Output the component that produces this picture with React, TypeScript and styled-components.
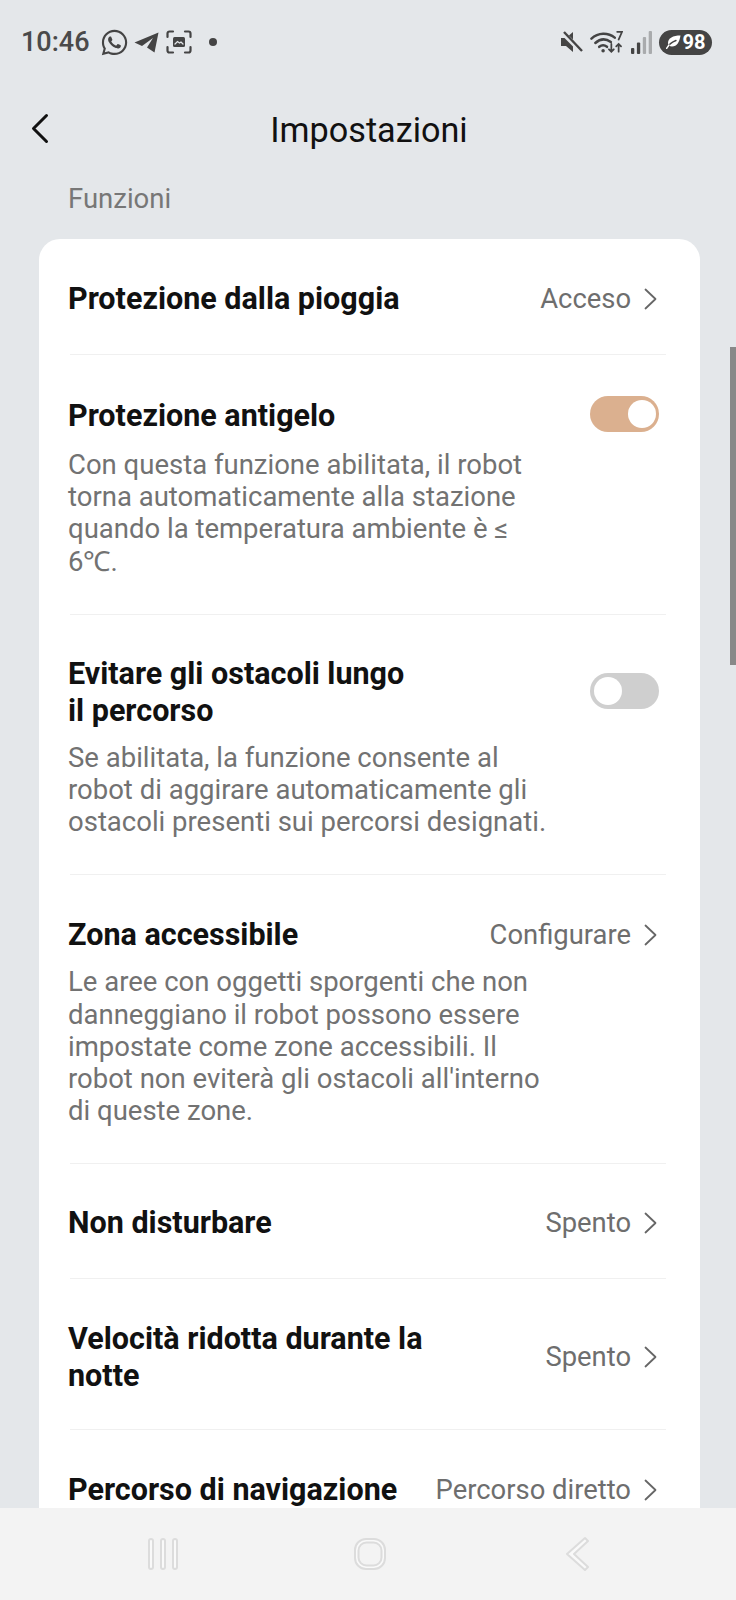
import styled, { createGlobalStyle } from 'styled-components'
import { FaWhatsapp } from 'react-icons/fa'

const GlobalStyle = createGlobalStyle`
  html, body {
    margin: 0;
    padding: 0;
    background: #e4e7ea;
    font-family: Roboto, "Liberation Sans", sans-serif;
  }
`

const Screen = styled.div`
  position: relative;
  width: 736px;
  height: 1600px;
  background: #e4e7ea;
  display: flex;
  flex-direction: column;
  overflow: hidden;
`

const StatusBar = styled.div`
  height: 84px;
  padding: 0 24px 0 21px;
  box-sizing: border-box;
  display: flex;
  align-items: center;
  justify-content: space-between;
  color: #444;
`

const StatusGroup = styled.div`
  display: flex;
  align-items: center;
`

const Time = styled.span`
  font-size: 27px;
  font-weight: 500;
  color: #4a4a4a;
  margin-right: 10px;
`

const Dot = styled.span`
  width: 8px;
  height: 8px;
  border-radius: 50%;
  background: #444;
  margin-left: 17px;
`

const Pill = styled.div`
  width: 53px;
  height: 25px;
  margin-left: 7px;
  border-radius: 13px;
  background: #444;
  color: #fff;
  font-size: 20px;
  font-weight: 700;
  display: flex;
  align-items: center;
  justify-content: center;
  gap: 2px;
`

const Header = styled.div`
  display: flex;
  align-items: center;
  justify-content: center;
  position: relative;
  height: 92px;
`

const BackButton = styled.div`
  position: absolute;
  left: 30px;
  top: 27px;
  width: 20px;
  height: 34px;
`

const PageTitle = styled.h1`
  margin: 0 0 0 2px;
  font-size: 34.2px;
  font-weight: 400;
  color: #111;
`

const SectionLabel = styled.div`
  margin: 7px 0 24px 68px;
  font-size: 27.5px;
  line-height: 32px;
  color: #777;
`

const Scroller = styled.div`
  flex: 1;
  min-height: 0;
  overflow: hidden;
`

const Card = styled.div`
  margin: 0 36px 0 39px;
  background: #fff;
  border-radius: 21px 21px 0 0;
`

const Row = styled.div<{ $top?: number; $bottom?: number; $gap?: number }>`
  margin: 0 34px 0 31px;
  padding: ${(p) => p.$top ?? 41}px 7px ${(p) => p.$bottom ?? 36}px 0;
  border-bottom: 1px solid #f0f0f0;
  display: flex;
  flex-direction: column;
  gap: ${(p) => p.$gap ?? 13}px;
`

const RowHead = styled.div`
  display: flex;
  justify-content: space-between;
  align-items: center;
`

const RowTitle = styled.div<{ $width?: number }>`
  font-size: 30.5px;
  line-height: 37px;
  font-weight: 700;
  color: #111;
  margin-left: -2px;
  ${(p) => (p.$width ? `max-width: ${p.$width}px;` : '')}
`

const RowDesc = styled.div`
  max-width: 490px;
  margin-left: -2px;
  font-size: 27.5px;
  line-height: 32.2px;
  color: #727272;
`

const RowValue = styled.div`
  display: flex;
  align-items: center;
  gap: 13px;
  height: 37px;
  margin-right: 2px;
  font-size: 27.4px;
  color: #6e6e6e;
  white-space: nowrap;
`

const Toggle = styled.div<{ $on?: boolean }>`
  width: 69px;
  height: 36px;
  margin-bottom: 2px;
  border-radius: 18px;
  background: ${(p) => (p.$on ? '#dbb08f' : '#cfcfcf')};
  display: flex;
  align-items: center;
  justify-content: ${(p) => (p.$on ? 'flex-end' : 'flex-start')};
  padding: 0 3px 0 4px;
  box-sizing: border-box;
`

const Knob = styled.span`
  width: 28px;
  height: 28px;
  border-radius: 50%;
  background: #fff;
`

const NavBar = styled.div`
  height: 92px;
  background: #f3f3f3;
  display: grid;
  grid-template-columns: repeat(3, 207px);
  align-items: center;
  justify-items: center;
  padding-left: 59px;
  box-sizing: border-box;
`

const ScrollThumb = styled.div`
  position: absolute;
  right: 0;
  top: 347px;
  width: 6px;
  height: 318px;
  background: #888;
`

const Chevron = () => (
  <svg width="13" height="22" viewBox="0 0 13 22" fill="none" stroke="#666" strokeWidth="1.8" strokeLinecap="round" strokeLinejoin="round">
    <path d="M1.500 1.500l10 9.500-10 9.500" />
  </svg>
)

const Value = ({ text }: { text: string }) => (
  <RowValue>
    {text}
    <Chevron />
  </RowValue>
)

const App = () => {
  return (
    <Screen>
      <GlobalStyle />
      <StatusBar>
        <StatusGroup>
          <Time>10:46</Time>
          <FaWhatsapp size={29} />
          <svg width="25" height="21" viewBox="0 0 25 21" fill="#444" style={{ marginLeft: 5 }}>
            <path d="M.5 10.500L24.500.5l-4 20-7.500-5 6-9.500-11 8z" />
          </svg>
          <svg width="26" height="24" viewBox="0 0 26 24" fill="none" stroke="#444" strokeWidth="2.200" strokeLinecap="round" style={{ marginLeft: 7 }}>
            <path d="M1.500 7V3.500a2 2 0 012-2H7M19 1.500h3.500a2 2 0 012 2V7M24.500 17v3.500a2 2 0 01-2 2H19M7 22.500H3.500a2 2 0 01-2-2V17" />
            <rect x="7" y="7" width="12" height="10" rx="1.500" fill="#444" stroke="none" />
            <path d="M9 14l2.500-2.500 2 1.500 1.500-1 2 2" stroke="#e4e7ea" strokeWidth="1.300" />
          </svg>
          <Dot />
        </StatusGroup>
        <StatusGroup>
          <svg width="22" height="22" viewBox="0 0 22 22" fill="#444">
            <path d="M0 7h5l7-6v20l-7-6H0z" />
            <path d="M1 1l20 20" stroke="#e4e7ea" strokeWidth="5" />
            <path d="M3 1l18 19" stroke="#444" strokeWidth="2.400" />
          </svg>
          <svg width="33" height="24" viewBox="0 0 34 24" fill="none" stroke="#444" strokeWidth="2.600" strokeLinecap="round" style={{ marginLeft: 7 }}>
            <path d="M1.500 8.500c7-6.500 17-6.500 24-1" />
            <path d="M5.500 13c5-4.500 11-4.500 16-1" />
            <path d="M9.500 17c2.500-2 5.500-2 8 0" />
            <circle cx="13.500" cy="21" r="1.800" fill="#444" stroke="none" />
            <path d="M22 14v8m-2.500-2.500L22 22l2.500-2.500M29.500 22v-8m-2.500 2.500l2.500-2.500 2.500 2.500" strokeWidth="1.800" />
            <path d="M28 1.500h5l-3.500 8" strokeWidth="1.800" />
          </svg>
          <svg width="21" height="23" viewBox="0 0 21 23" style={{ marginLeft: 8 }}>
            <rect x="0" y="17" width="3.300" height="6" rx="1" fill="#444" />
            <rect x="5.900" y="11.500" width="3.300" height="11.500" rx="1" fill="#444" />
            <rect x="11.800" y="6" width="3.300" height="17" rx="1" fill="#a9abad" />
            <rect x="17.700" y="0" width="3.300" height="23" rx="1" fill="#a9abad" />
          </svg>
          <Pill>
            <svg width="15" height="14" viewBox="0 0 15 14">
              <path d="M14.500.5C7 .5 2 3 2 8c0 2 1.500 3.500 4 3.500 5 0 7.500-4.500 8.500-11z" fill="#fff" />
              <path d="M.5 13.500C3 9 6 7 10 5.500" fill="none" stroke="#444" strokeWidth="1.400" strokeLinecap="round" />
              <path d="M.5 13.500L3 10" fill="none" stroke="#fff" strokeWidth="1.400" strokeLinecap="round" />
            </svg>
            98
          </Pill>
        </StatusGroup>
      </StatusBar>
      <Header>
        <BackButton>
          <svg width="20" height="34" viewBox="0 0 20 34" fill="none" stroke="#111" strokeWidth="3" strokeLinecap="round" strokeLinejoin="round">
            <path d="M16.500 4.500l-13 13 13 13" />
          </svg>
        </BackButton>
        <PageTitle>Impostazioni</PageTitle>
      </Header>
      <SectionLabel>Funzioni</SectionLabel>
      <Scroller>
        <Card>
          <Row $bottom={37}>
            <RowHead>
              <RowTitle>Protezione dalla pioggia</RowTitle>
              <Value text="Acceso" />
            </RowHead>
          </Row>
          <Row $gap={15}>
            <RowHead>
              <RowTitle>Protezione antigelo</RowTitle>
              <Toggle $on>
                <Knob />
              </Toggle>
            </RowHead>
            <RowDesc>
              Con questa funzione abilitata, il robot torna automaticamente alla stazione quando la temperatura ambiente è ≤ 6℃.
            </RowDesc>
          </Row>
          <Row $top={40}>
            <RowHead>
              <RowTitle $width={345}>Evitare gli ostacoli lungo il percorso</RowTitle>
              <Toggle>
                <Knob />
              </Toggle>
            </RowHead>
            <RowDesc>
              Se abilitata, la funzione consente al robot di aggirare automaticamente gli ostacoli presenti sui percorsi designati.
            </RowDesc>
          </Row>
          <Row>
            <RowHead>
              <RowTitle>Zona accessibile</RowTitle>
              <Value text="Configurare" />
            </RowHead>
            <RowDesc>
              Le aree con oggetti sporgenti che non danneggiano il robot possono essere impostate come zone accessibili. Il robot non eviterà gli ostacoli all'interno di queste zone.
            </RowDesc>
          </Row>
          <Row $top={40} $bottom={37}>
            <RowHead>
              <RowTitle>Non disturbare</RowTitle>
              <Value text="Spento" />
            </RowHead>
          </Row>
          <Row $bottom={35}>
            <RowHead>
              <RowTitle $width={360}>Velocità ridotta durante la notte</RowTitle>
              <Value text="Spento" />
            </RowHead>
          </Row>
          <Row>
            <RowHead>
              <RowTitle>Percorso di navigazione</RowTitle>
              <Value text="Percorso diretto" />
            </RowHead>
          </Row>
        </Card>
      </Scroller>
      <NavBar>
        <svg width="32" height="34" viewBox="0 0 32 34" fill="#f9f9f9" stroke="#dcdcdc" strokeWidth="2">
          <rect x="2" y="2" width="4" height="30" rx="2" />
          <rect x="14" y="2" width="4" height="30" rx="2" />
          <rect x="26" y="2" width="4" height="30" rx="2" />
        </svg>
        <svg width="34" height="34" viewBox="0 0 34 34" stroke="#dcdcdc" strokeWidth="2">
          <rect x="2" y="2" width="30" height="30" rx="11" fill="#f9f9f9" />
          <rect x="5.500" y="5.500" width="23" height="23" rx="8" fill="#f3f3f3" />
        </svg>
        <svg width="24" height="36" viewBox="0 0 24 36" fill="#f9f9f9" stroke="#dcdcdc" strokeWidth="2" strokeLinejoin="round">
          <path d="M20 2l3 3L9 18l14 13-3 3L2 18z" />
        </svg>
      </NavBar>
      <ScrollThumb />
    </Screen>
  )
}

export default App
